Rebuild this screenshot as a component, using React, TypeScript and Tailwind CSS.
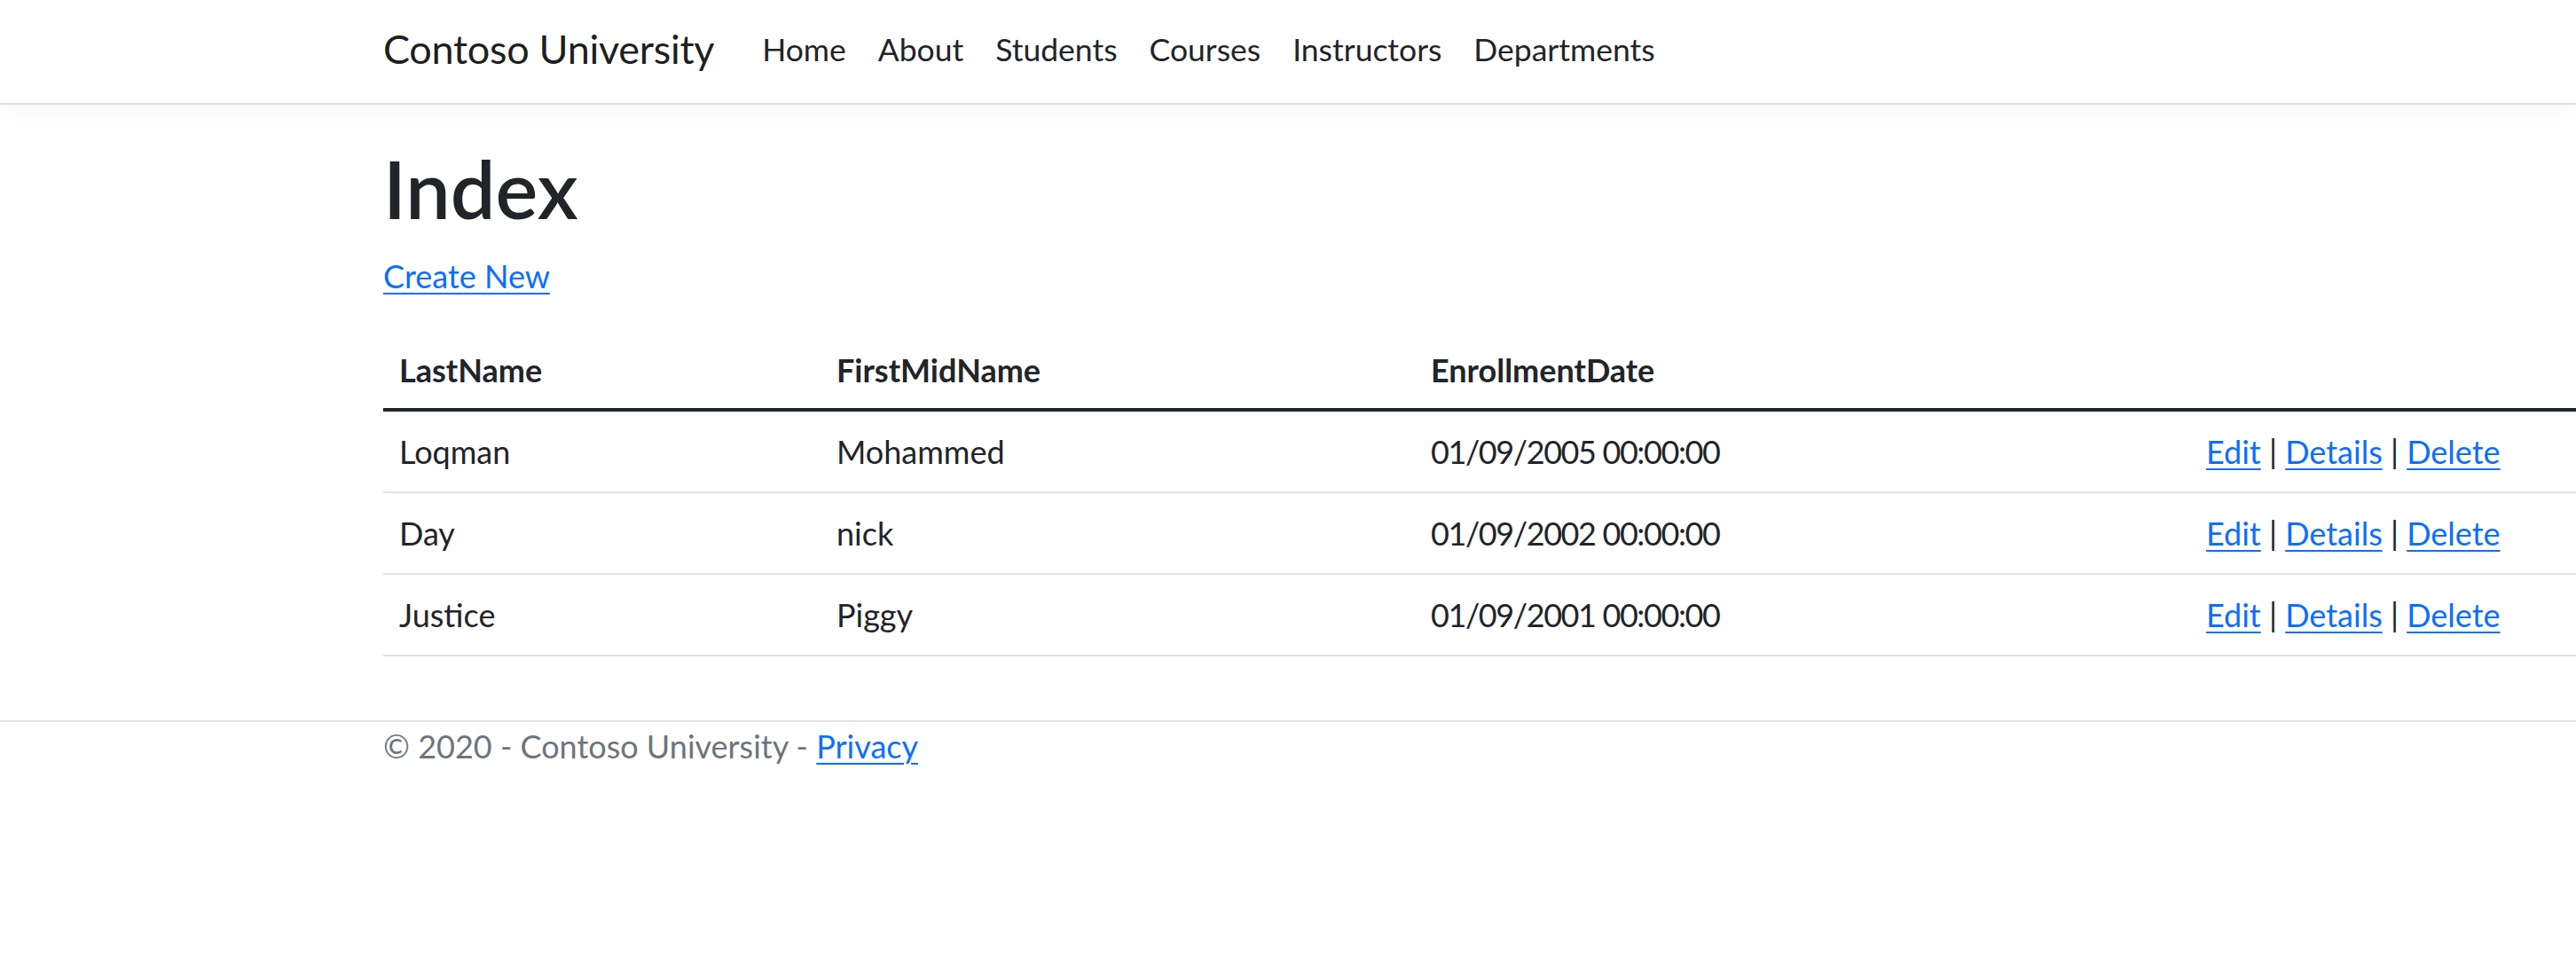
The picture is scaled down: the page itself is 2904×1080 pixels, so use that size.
const students = [
  { last: "Loqman", first: "Mohammed", date: "01/09/2005 00:00:00" },
  { last: "Day", first: "nick", date: "01/09/2002 00:00:00" },
  { last: "Justice", first: "Piggy", date: "01/09/2001 00:00:00" },
];

const navLinks = ["Home", "About", "Students", "Courses", "Instructors", "Departments"];

export default function App() {
  return (
    <div className="min-h-screen overflow-x-hidden bg-white text-[#212529] font-['Lato',_'Liberation_Sans',_sans-serif] text-[36px] leading-[54px]">

      {/* ================= NAVBAR ================= */}
      <nav className="h-[118px] border-b-2 border-[#dee2e6] bg-white shadow-[0_9px_27px_rgba(0,0,0,0.035)]">
        <div className="h-[116px] pl-[432px] pb-[6px] flex items-center">
          <a className="text-[45px] leading-[68px] tracking-[-0.3px] text-black/90 mr-[36px] whitespace-nowrap">
            Contoso University
          </a>
          <ul className="flex items-center">
            {navLinks.map((l) => (
              <li key={l}>
                <a className="px-[18px] text-[35.5px] text-[#212529] whitespace-nowrap">{l}</a>
              </li>
            ))}
          </ul>
        </div>
      </nav>

      {/* ================= MAIN ================= */}
      <main className="pl-[432px] pt-[40px] pb-[36px]">
        <h1 className="text-[90px] leading-[108px] font-semibold mb-[18px]">Index</h1>

        <p className="mb-[36px]">
          <a className="text-[#0d6efd] underline underline-offset-[5px] decoration-[2px]">Create New</a>
        </p>

        <table className="w-[2472px] table-fixed border-collapse mb-[36px]">
          <colgroup>
            <col className="w-[493px]" />
            <col className="w-[670px]" />
            <col className="w-[874px]" />
            <col />
          </colgroup>
          <thead>
            <tr className="border-b-4 border-[#212529]">
              <th className="text-left font-bold px-[18px] pt-[16px] pb-[16px]">LastName</th>
              <th className="text-left font-bold px-[18px] pt-[16px] pb-[16px]">FirstMidName</th>
              <th className="text-left font-bold px-[18px] pt-[16px] pb-[16px]">EnrollmentDate</th>
              <th className="px-[18px]"></th>
            </tr>
          </thead>
          <tbody>
            {students.map((s) => (
              <tr key={s.last} className="border-b-2 border-[#dee2e6]">
                <td className="px-[18px] py-[18px]">{s.last}</td>
                <td className="px-[18px] py-[18px]">{s.first}</td>
                <td className="px-[18px] py-[18px] tracking-[-1.4px]">{s.date}</td>
                <td className="px-[18px] py-[18px] whitespace-nowrap">
                  <a className="text-[#0d6efd] underline underline-offset-[5px] decoration-[2px]">Edit</a> |{" "}
                  <a className="text-[#0d6efd] underline underline-offset-[5px] decoration-[2px]">Details</a> |{" "}
                  <a className="text-[#0d6efd] underline underline-offset-[5px] decoration-[2px]">Delete</a>
                </td>
              </tr>
            ))}
          </tbody>
        </table>
      </main>

      {/* ================= FOOTER ================= */}
      <footer className="border-t-2 border-[#dee2e6] text-[#6c757d] whitespace-nowrap">
        <div className="pl-[432px]">
          © 2020 - Contoso University -{" "}
          <a className="text-[#0d6efd] underline underline-offset-[5px] decoration-[2px]">Privacy</a>
        </div>
      </footer>
    </div>
  );
}
